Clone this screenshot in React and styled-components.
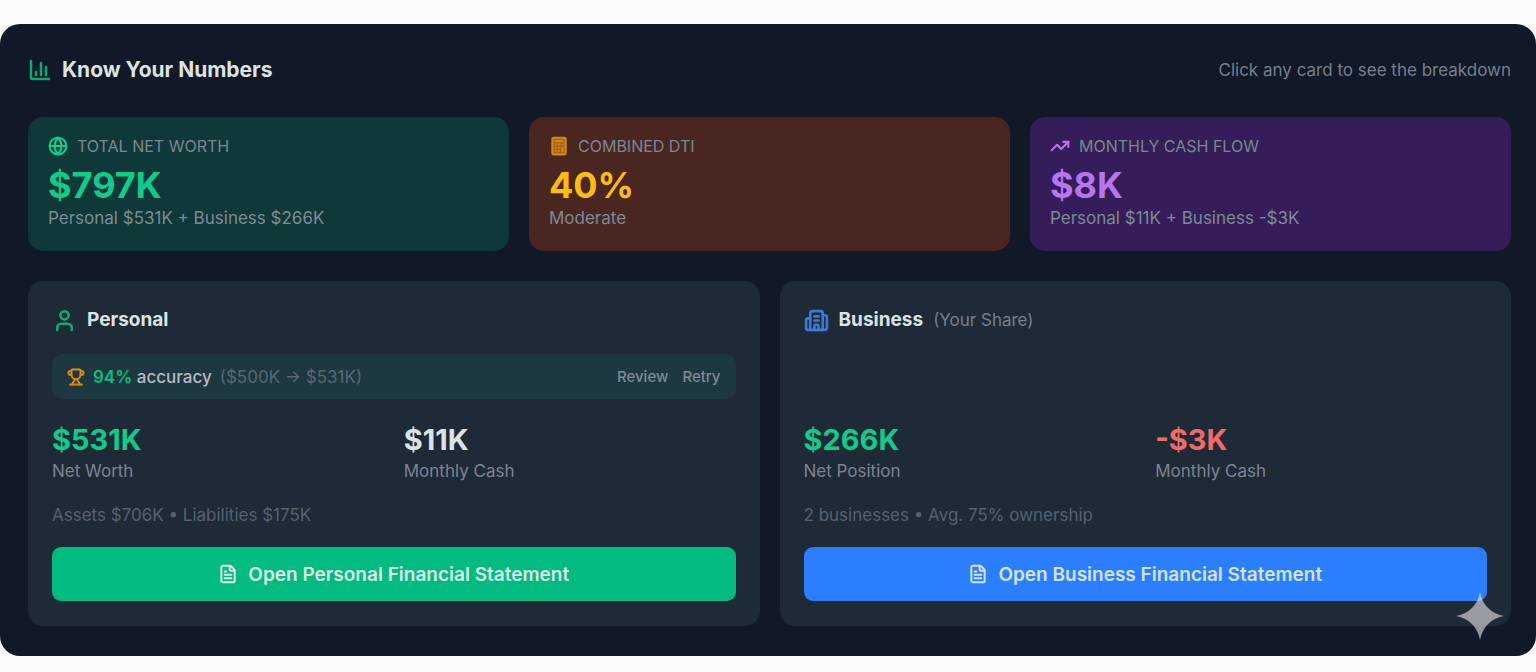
import React from "react";
import styled, { createGlobalStyle } from "styled-components";
import {
  ChartColumn,
  Globe,
  Calculator,
  TrendingUp,
  User,
  Building2,
  Trophy,
  FileText,
} from "lucide-react";

const GlobalStyle = createGlobalStyle`
  *, *::before, *::after { box-sizing: border-box; }
  body {
    margin: 0;
    background: #fbfbfb;
    font-family: Inter, "Liberation Sans", sans-serif;
    color: #e5e9ec;
  }
  button { font: inherit; border: 0; margin: 0; cursor: pointer; }
  h2, h3, p { margin: 0; }
  svg { flex: none; }
`;

const Page = styled.main`
  padding: 24px 0 16px;
`;

const Dashboard = styled.section`
  position: relative;
  padding: 31px 25px 30px 28px;
  border-radius: 20px;
  background: #111827;
`;

const Header = styled.header`
  display: flex;
  align-items: center;
  justify-content: space-between;
  margin-bottom: 32px;
`;

const Heading = styled.div`
  display: flex;
  align-items: center;
  gap: 10px;
  color: ${(p) => p.$accent};
`;

const Title = styled.h2`
  font-size: 21px;
  line-height: 30px;
  font-weight: 700;
  color: #dbe3e5;
`;

const Hint = styled.p`
  font-size: 17px;
  line-height: 24px;
  color: #75808c;
`;

const SummaryGrid = styled.div`
  display: grid;
  grid-template-columns: repeat(3, 1fr);
  gap: 20px;
  margin-bottom: 30px;
`;

const SummaryCard = styled.button`
  display: flex;
  flex-direction: column;
  align-items: flex-start;
  padding: 19px 20px 20px;
  border-radius: 15px;
  text-align: left;
  background: ${(p) => p.$background};
  color: ${(p) => p.$accent};
`;

const SummaryLabel = styled.span`
  display: flex;
  align-items: center;
  gap: 9px;
  margin-bottom: 8px;
  font-size: 16px;
  line-height: 20px;
  text-transform: uppercase;
`;

const Muted = styled.span`
  color: #7b8791;
`;

const SummaryValue = styled.strong`
  font-size: 36px;
  line-height: 42px;
  font-weight: 700;
`;

const SummaryNote = styled.span`
  font-size: 17px;
  line-height: 25px;
  color: #7f8a94;
`;

const PanelGrid = styled.div`
  display: grid;
  grid-template-columns: repeat(2, 1fr);
  gap: 20px;
`;

const Panel = styled.article`
  display: flex;
  flex-direction: column;
  padding: 24px 24px 25px;
  border-radius: 15px;
  background: #1f2a37;
`;

const PanelTitle = styled.h3`
  font-size: 19px;
  line-height: 30px;
  font-weight: 700;
  color: #dbe3e5;
`;

const PanelNote = styled.span`
  font-size: 17px;
  line-height: 30px;
  color: #75808c;
`;

const Accuracy = styled.div`
  display: flex;
  align-items: center;
  gap: 8px;
  margin-top: 19px;
  padding: 0 15px;
  height: 45px;
  border-radius: 10px;
  background: #1d3840;
  color: #dd8b12;
  font-size: 17px;
`;

const AccuracyText = styled.span`
  font-weight: 500;
  color: #b5bbc2;
`;

const Score = styled.b`
  font-weight: 600;
  color: #0bbd83;
`;

const Range = styled.span`
  color: #596773;
`;

const Actions = styled.div`
  display: flex;
  gap: 14px;
  margin-left: auto;
`;

const TextButton = styled.button`
  padding: 0;
  background: none;
  font-size: 15px;
  line-height: 24px;
  font-weight: 500;
  color: #7f8a95;
`;

const Metrics = styled.dl`
  display: grid;
  grid-template-columns: repeat(2, 1fr);
  gap: 20px;
  margin: auto 0 0;
  padding-top: 24px;
`;

const Metric = styled.div`
  display: flex;
  flex-direction: column-reverse;
  gap: 3px;
`;

const MetricLabel = styled.dt`
  font-size: 17px;
  line-height: 22px;
  color: #7b8591;
`;

const MetricValue = styled.dd`
  margin: 0;
  font-size: 29px;
  line-height: 34px;
  font-weight: 700;
  color: ${(p) => p.$color};
`;

const Meta = styled.p`
  margin: 22px 0 21px;
  font-size: 17px;
  line-height: 22px;
  color: #556270;
`;

const OpenButton = styled.button`
  display: flex;
  align-items: center;
  justify-content: center;
  gap: 10px;
  height: 54px;
  border-radius: 9px;
  background: ${(p) => p.$background};
  color: ${(p) => p.$color};
  font-size: 19px;
  font-weight: 600;
`;

const Sparkle = styled.svg`
  position: absolute;
  right: 32px;
  bottom: 16px;
  width: 48px;
  height: 48px;
`;

const GREEN = "#0fcb8c";

const summaries = [
  { label: "Total Net Worth", value: "$797K", note: "Personal $531K + Business $266K", background: "#0f3838", accent: GREEN, Icon: Globe },
  { label: "Combined DTI", value: "40%", note: "Moderate", background: "#4a2621", accent: "#fdbd10", iconColor: "#d38a14", iconFill: "#a3651a", Icon: Calculator },
  { label: "Monthly Cash Flow", value: "$8K", note: "Personal $11K + Business -$3K", background: "#341d59", accent: "#b874ec", Icon: TrendingUp },
];

function MetricItem({ value, label, color }) {
  return (
    <Metric>
      <MetricLabel>{label}</MetricLabel>
      <MetricValue $color={color}>{value}</MetricValue>
    </Metric>
  );
}

export default function App() {
  return (
    <Page>
      <GlobalStyle />
      <Dashboard>
        <Header>
          <Heading $accent="#0ca873">
            <ChartColumn size={24} strokeWidth={2.5} />
            <Title>Know Your Numbers</Title>
          </Heading>
          <Hint>Click any card to see the breakdown</Hint>
        </Header>

        <SummaryGrid>
          {summaries.map(({ label, value, note, background, accent, iconColor, iconFill, Icon }) => (
            <SummaryCard key={label} type="button" $background={background} $accent={accent}>
              <SummaryLabel>
                <Icon size={20} strokeWidth={2.5} color={iconColor || accent} fill={iconFill || "none"} />
                <Muted>{label}</Muted>
              </SummaryLabel>
              <SummaryValue>{value}</SummaryValue>
              <SummaryNote>{note}</SummaryNote>
            </SummaryCard>
          ))}
        </SummaryGrid>

        <PanelGrid>
          <Panel>
            <Heading $accent="#0bad78">
              <User size={25} strokeWidth={2.4} />
              <PanelTitle>Personal</PanelTitle>
            </Heading>
            <Accuracy>
              <Trophy size={18} strokeWidth={2.5} />
              <AccuracyText>
                <Score>94%</Score> accuracy
              </AccuracyText>
              <Range>($500K → $531K)</Range>
              <Actions>
                <TextButton type="button">Review</TextButton>
                <TextButton type="button">Retry</TextButton>
              </Actions>
            </Accuracy>
            <Metrics>
              <MetricItem value="$531K" label="Net Worth" color={GREEN} />
              <MetricItem value="$11K" label="Monthly Cash" color="#dbe3e5" />
            </Metrics>
            <Meta>Assets $706K • Liabilities $175K</Meta>
            <OpenButton type="button" $background="#03ba80" $color="#d9efe6">
              <FileText size={20} strokeWidth={2.4} />
              Open Personal Financial Statement
            </OpenButton>
          </Panel>

          <Panel>
            <Heading $accent="#3b7ad9">
              <Building2 size={25} strokeWidth={2.5} />
              <PanelTitle>Business</PanelTitle>
              <PanelNote>(Your Share)</PanelNote>
            </Heading>
            <Metrics>
              <MetricItem value="$266K" label="Net Position" color={GREEN} />
              <MetricItem value="-$3K" label="Monthly Cash" color="#f06a6a" />
            </Metrics>
            <Meta>2 businesses • Avg. 75% ownership</Meta>
            <OpenButton type="button" $background="#2b7ffe" $color="#d3e3fd">
              <FileText size={20} strokeWidth={2.4} />
              Open Business Financial Statement
            </OpenButton>
          </Panel>
        </PanelGrid>

        <Sparkle viewBox="0 0 48 48" aria-hidden="true">
          <path
            d="M24 0C25.5 7 28 12 32 16C36 20 41 22.5 48 24C41 25.5 36 28 32 32C28 36 25.5 41 24 48C22.5 41 20 36 16 32C12 28 7 25.5 0 24C7 22.5 12 20 16 16C20 12 22.5 7 24 0Z"
            fill="#ffffff"
            fillOpacity="0.54"
          />
        </Sparkle>
      </Dashboard>
    </Page>
  );
}
